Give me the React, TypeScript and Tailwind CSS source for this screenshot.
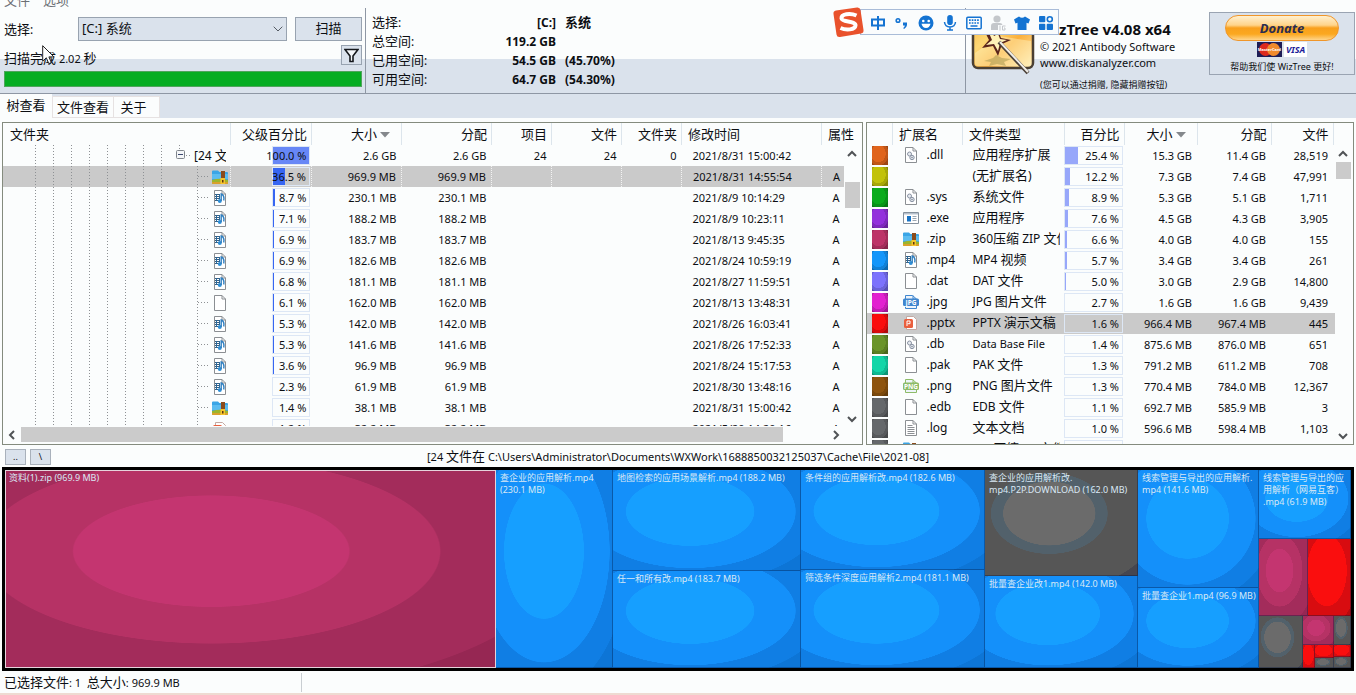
import type { ReactNode } from "react";

/* ---------- text: Han runs are set larger than Latin runs ---------- */

type Size = "ui" | "compact" | "tiny";

const hanSize: Record<Size, string> = {
  ui: "text-[13px]",
  compact: "text-[13px]",
  tiny: "text-[9px]",
};
const latinSize: Record<Size, string> = {
  ui: "text-[12px]",
  compact: "text-[11px]",
  tiny: "text-[9px]",
};

function Mixed({ children, size = "ui" }: { children: string; size?: Size }) {
  const parts = children.split(/([\u3000-\u9fff\uff00-\uffef]+)/).filter(Boolean);
  return (
    <>
      {parts.map((p, i) => (
        <span key={i} className={/[\u3000-\u9fff]/.test(p) ? hanSize[size] : latinSize[size]}>
          {p}
        </span>
      ))}
    </>
  );
}

/* ---------- file icons ---------- */

type IconName = "zip" | "mp4" | "blank" | "gear" | "exe" | "jpg" | "png" | "pptx" | "text" | "none";

function Page({ children }: { children?: ReactNode }) {
  return (
    <svg viewBox="0 0 16 16" className="h-4 w-4 shrink-0">
      <path d="M2.5.5h7.500l3.500 3.500v11.500h-11z" fill="#fff" stroke="#8b8f93" />
      <path d="M10 .5v3.500h3.500" fill="none" stroke="#8b8f93" />
      {children}
    </svg>
  );
}

function FileIcon({ name }: { name: IconName }) {
  switch (name) {
    case "zip":
      return (
        <svg viewBox="0 0 16 16" className="h-4 w-4 shrink-0">
          <path d="M0 2.500q0-1 1-1h5l1.500 1.500h7.500q1 0 1 1v8H0z" fill="#3aa5e6" />
          <path d="M0 5h16v5H0z" fill="#5bbcf0" />
          <path d="M0 11q8-2.500 16 0v3q0 1-1 1H1q-1 0-1-1z" fill="#9db52c" />
          <path d="M0 13h16v1q0 1-1 1H1q-1 0-1-1z" fill="#d9a02c" />
          <path d="M9 2h4v9H9z" fill="#8a4b1c" />
          <path d="M8.500 9h4.500v6H8.500z" fill="#f6c52c" />
          <path d="M10 11h1.500v2.500H10z" fill="#5a3510" />
        </svg>
      );
    case "mp4":
      return (
        <Page>
          <path d="M3 4.500h5M3 6.500h4M3 8.500h5M3 10.500h3" stroke="#3a5f80" />
          <path d="M4.500 4v7M7.500 4v5" stroke="#2b6a9c" />
          <circle cx="7.800" cy="11" r="2" fill="#2f8fd6" />
          <path d="M9.200 11V4q3.600 1.500 2.500 6.500" fill="none" stroke="#2f7fc0" strokeWidth="1.400" />
        </Page>
      );
    case "gear":
      return (
        <Page>
          <circle cx="6.500" cy="7" r="2" fill="#e8ecf1" stroke="#8993a3" />
          <circle cx="9" cy="10.500" r="2.200" fill="#dfe4ea" stroke="#8993a3" />
          <circle cx="9" cy="10.500" r=".7" fill="#6e7989" />
        </Page>
      );
    case "exe":
      return (
        <svg viewBox="0 0 16 16" className="h-4 w-4 shrink-0">
          <path d="M.5 2.500h15v11H.5z" fill="#fff" stroke="#85909c" />
          <path d="M1 3h14v1.500H1z" fill="#b6c1cc" />
          <path d="M4 6h4v5.500H4z" fill="#1873c4" />
          <path d="M9.500 6.500h4M9.500 8.500h4M9.500 10.500h4" stroke="#9aa6b2" />
        </svg>
      );
    case "jpg":
    case "png": {
      const c = name === "jpg" ? "#3f86cf" : "#8dbb68";
      return (
        <svg viewBox="0 0 16 16" className="h-4 w-4 shrink-0">
          <path d="M2.500 5V1.500h7l4 3.500M10 1.500V5h3.500M2.500 12v2.500h11V12" fill="#eef4fa" stroke={c} />
          <rect x="0" y="4.500" width="16" height="7.500" rx="1.500" fill={c} />
          <text x="8" y="10.700" textAnchor="middle" fontSize="6.500" fontWeight="700" fill="#fff">
            {name.toUpperCase()}
          </text>
        </svg>
      );
    }
    case "pptx":
      return (
        <svg viewBox="0 0 16 16" className="h-4 w-4 shrink-0">
          <path d="M3.500 1.500h7l3 3v10h-10z" fill="#fff" stroke="#c3a9a2" />
          <rect x="1" y="4" width="9" height="9" rx="1.500" fill="#ea5f3d" />
          <path d="M4 11V6h3v2.700H4.500" fill="none" stroke="#fff" />
        </svg>
      );
    case "text":
      return (
        <Page>
          <path d="M4.500 5.500h5M4.500 7.500h7M4.500 9.500h7M4.500 11.500h7M4.500 13.500h7" stroke="#8b8f93" />
        </Page>
      );
    case "blank":
      return <Page />;
    default:
      return <span className="h-4 w-4 shrink-0" />;
  }
}

function Chevron({ dir }: { dir: "up" | "down" | "left" | "right" }) {
  const d = {
    up: "M1 7 5 3l4 4",
    down: "M1 3l4 4 4-4",
    left: "M7 1 3 5l4 4",
    right: "M3 1l4 4-4 4",
  }[dir];
  return (
    <svg viewBox="0 0 10 10" className="h-[10px] w-[10px] shrink-0">
      <path d={d} fill="none" stroke="#505356" strokeWidth="2" />
    </svg>
  );
}

/* ---------- data ---------- */

type TreeRow = { icon: IconName; pct: number; size: string; date: string };

const treeRows: TreeRow[] = [
  { icon: "zip", pct: 36.5, size: "969.9 MB", date: "2021/8/31 14:55:54" },
  { icon: "mp4", pct: 8.7, size: "230.1 MB", date: "2021/8/9 10:14:29" },
  { icon: "mp4", pct: 7.1, size: "188.2 MB", date: "2021/8/9 10:23:11" },
  { icon: "mp4", pct: 6.9, size: "183.7 MB", date: "2021/8/13 9:45:35" },
  { icon: "mp4", pct: 6.9, size: "182.6 MB", date: "2021/8/24 10:59:19" },
  { icon: "mp4", pct: 6.8, size: "181.1 MB", date: "2021/8/27 11:59:51" },
  { icon: "blank", pct: 6.1, size: "162.0 MB", date: "2021/8/13 13:48:31" },
  { icon: "mp4", pct: 5.3, size: "142.0 MB", date: "2021/8/26 16:03:41" },
  { icon: "mp4", pct: 5.3, size: "141.6 MB", date: "2021/8/26 17:52:33" },
  { icon: "mp4", pct: 3.6, size: "96.9 MB", date: "2021/8/24 15:17:53" },
  { icon: "mp4", pct: 2.3, size: "61.9 MB", date: "2021/8/30 13:48:16" },
  { icon: "zip", pct: 1.4, size: "38.1 MB", date: "2021/8/31 15:00:42" },
  { icon: "pptx", pct: 1.2, size: "32.2 MB", date: "2021/5/20 14:20:16" },
];

type ExtRow = {
  color: string;
  icon: IconName;
  ext: string;
  type: string;
  pct: number;
  size: string;
  alloc: string;
  files: string;
};

const extRows: ExtRow[] = [
  { color: "bg-[#e0641c]", icon: "gear", ext: ".dll", type: "应用程序扩展", pct: 25.4, size: "15.3 GB", alloc: "11.4 GB", files: "28,519" },
  { color: "bg-[#c2c20a]", icon: "none", ext: "", type: "(无扩展名)", pct: 12.2, size: "7.3 GB", alloc: "7.4 GB", files: "47,991" },
  { color: "bg-[#0aac1c]", icon: "gear", ext: ".sys", type: "系统文件", pct: 8.9, size: "5.3 GB", alloc: "5.1 GB", files: "1,711" },
  { color: "bg-[#9332dc]", icon: "exe", ext: ".exe", type: "应用程序", pct: 7.6, size: "4.5 GB", alloc: "4.3 GB", files: "3,905" },
  { color: "bg-[#bd3468]", icon: "zip", ext: ".zip", type: "360压缩 ZIP 文件", pct: 6.6, size: "4.0 GB", alloc: "4.0 GB", files: "155" },
  { color: "bg-[#1496fa]", icon: "mp4", ext: ".mp4", type: "MP4 视频", pct: 5.7, size: "3.4 GB", alloc: "3.4 GB", files: "261" },
  { color: "bg-[#7c72fc]", icon: "blank", ext: ".dat", type: "DAT 文件", pct: 5.0, size: "3.0 GB", alloc: "2.9 GB", files: "14,800" },
  { color: "bg-[#e222d0]", icon: "jpg", ext: ".jpg", type: "JPG 图片文件", pct: 2.7, size: "1.6 GB", alloc: "1.6 GB", files: "9,439" },
  { color: "bg-[#fa0c0c]", icon: "pptx", ext: ".pptx", type: "PPTX 演示文稿", pct: 1.6, size: "966.4 MB", alloc: "967.4 MB", files: "445" },
  { color: "bg-[#6a9428]", icon: "gear", ext: ".db", type: "Data Base File", pct: 1.4, size: "875.6 MB", alloc: "876.0 MB", files: "651" },
  { color: "bg-[#12d6a8]", icon: "blank", ext: ".pak", type: "PAK 文件", pct: 1.3, size: "791.2 MB", alloc: "611.2 MB", files: "708" },
  { color: "bg-[#8e540e]", icon: "png", ext: ".png", type: "PNG 图片文件", pct: 1.3, size: "770.4 MB", alloc: "784.0 MB", files: "12,367" },
  { color: "bg-[#65686b]", icon: "blank", ext: ".edb", type: "EDB 文件", pct: 1.1, size: "692.7 MB", alloc: "585.9 MB", files: "3" },
  { color: "bg-[#65686b]", icon: "text", ext: ".log", type: "文本文档", pct: 1.0, size: "596.6 MB", alloc: "598.4 MB", files: "1,103" },
  { color: "bg-[#65686b]", icon: "zip", ext: ".7z", type: "360压缩 7Z 文件", pct: 0.9, size: "", alloc: "", files: "" },
];

/* ---------- header ---------- */

function ScanControls() {
  return (
    <section className="flex w-[365px] shrink-0 flex-col pl-1 pr-[3px] pt-[9px]">
      <div className="flex items-center">
        <label htmlFor="drive" className="w-[74px] leading-4">
          <Mixed>选择:</Mixed>
        </label>
        <div className="relative flex-1">
          <select
            id="drive"
            className="block h-6 w-full appearance-none border border-[#98a3b0] bg-[#dae2ec] pl-[3px] text-[13px] outline-none"
          >
            <option>[C:] 系统</option>
          </select>
          <svg viewBox="0 0 10 6" className="pointer-events-none absolute right-1 top-[9px] h-[6px] w-[10px]">
            <path d="M.7.700 5 5 9.300.700" fill="none" stroke="#555b63" />
          </svg>
        </div>
        <button className="ml-2 h-6 w-[67px] border border-[#98a3b0] bg-[#dae2ec] text-[13px]">扫描</button>
      </div>
      <div className="mt-1 flex items-start justify-between">
        <p className="pt-[5px] leading-4">
          <Mixed size="compact">扫描完成 2.02 秒</Mixed>
        </p>
        <button
          aria-label="筛选"
          className="flex h-5 w-[21px] items-center justify-center border border-[#98a3b0] bg-[#dae2ec]"
        >
          <svg viewBox="0 0 15 15" className="h-[15px] w-[15px]">
            <path d="M1 1.500h13L9 8v5.500H6V8z" fill="#f4f7fa" stroke="#15181c" strokeWidth="1.600" />
          </svg>
        </button>
      </div>
      <div
        role="progressbar"
        aria-valuenow={100}
        aria-label="扫描进度"
        className="mt-1 h-4 border border-[#4fa45c] bg-[#06ad22]"
      />
    </section>
  );
}

const driveInfo = [
  ["选择:", "[C:]", "系统"],
  ["总空间:", "119.2 GB", ""],
  ["已用空间:", "54.5 GB", "(45.70%)"],
  ["可用空间:", "64.7 GB", "(54.30%)"],
];

function DriveInfo() {
  return (
    <section className="flex-1 border-l border-[#8e97a4] pl-[6px] pt-[5px]">
      <table className="border-collapse">
        <tbody>
          {driveInfo.map(([k, v, extra]) => (
            <tr key={k} className="h-[19px] leading-4">
              <th scope="row" className="w-[100px] p-0 text-left font-normal">
                <Mixed>{k}</Mixed>
              </th>
              <td className="w-[84px] p-0 text-right font-bold">
                <Mixed>{v}</Mixed>
              </td>
              <td className="p-0 pl-[9px] font-bold">
                <Mixed>{extra}</Mixed>
              </td>
            </tr>
          ))}
        </tbody>
      </table>
    </section>
  );
}

function WizardLogo() {
  return (
    <svg viewBox="0 0 64 66" className="h-[66px] w-16 shrink-0">
      <defs>
        <linearGradient id="goldBox" x1="0" y1="0" x2="1" y2="1">
          <stop offset="0" stopColor="#f7b23a" />
          <stop offset=".35" stopColor="#fdd774" />
          <stop offset=".6" stopColor="#fbb03c" />
          <stop offset="1" stopColor="#fff0bd" />
        </linearGradient>
      </defs>
      <rect x="2" y="2" width="60" height="55" rx="5" fill="url(#goldBox)" stroke="#4a3f33" strokeWidth="2.500" />
      <path d="M4 42 28 25 60 30V52q0 3-3 3H7q-3 0-3-3z" fill="#fff3c4" opacity=".45" />
      <path d="M13 50l9-3 3-3 6 3 9 1-7 3 2 4-9-2-8 2 2-4z" fill="#b9a55c" opacity=".7" />
      <path d="M26 16l4 11 10 2-9 4-4 12-5-10-11 2 7-8-5-10 9 5z" fill="#5a241b" />
      <path d="M26 20l3 8 7 1-7 3-2 8-4-7-8 1 6-5-3-7 6 3z" fill="#fff2b8" />
      <path d="M28 31 57 62" stroke="#4b4038" strokeWidth="4" />
      <path d="M29 31 57 61" stroke="#f2efe9" strokeWidth="2" />
    </svg>
  );
}

function About() {
  return (
    <section className="flex w-[391px] shrink-0 border-l border-[#8e97a4] pr-px">
      <div className="pl-[5px] pt-[3px]">
        <WizardLogo />
      </div>
      <div className="w-[174px] shrink-0 whitespace-nowrap pl-[5px] pt-[11px]">
        <h1 className="text-[15px] font-bold leading-5">WizTree v4.08 x64</h1>
        <p className="text-[11px] leading-4">© 2021 Antibody Software</p>
        <a href="https://www.diskanalyzer.com" className="block text-[11px] leading-4">
          www.diskanalyzer.com
        </a>
        <p className="mt-[6px] text-[9px] leading-4">(您可以通过捐赠, 隐藏捐赠按钮)</p>
      </div>
      <div className="mt-1 flex h-[63px] flex-1 flex-col items-center border border-[#9aa4b2] bg-[#dae2ec] pt-[2px]">
        <button className="h-[26px] w-[114px] rounded-full border border-[#f0962a] bg-[linear-gradient(#fff0cf_0,#ffd48a_38%,#f9a01c_50%,#fba81f_75%,#ffd58a_100%)] text-[13px] font-bold italic leading-[22px] text-[#2b2d4f]">
          Donate
        </button>
        <div className="mt-px flex h-[15px] gap-[2px]">
          <svg viewBox="0 0 25 15" className="h-[15px] w-[25px]">
            <path d="M0 0h25v15H0z" fill="#1d1c55" />
            <circle cx="8.500" cy="7.500" r="6.500" fill="#dc2a1e" />
            <circle cx="16.500" cy="7.500" r="6.500" fill="#f08a2c" />
            <text x="12.500" y="9" textAnchor="middle" fontSize="4" fontWeight="700" fill="#fff">
              MasterCard
            </text>
          </svg>
          <span className="bg-white px-[2px] text-[9px] font-bold italic leading-[15px] text-[#1c1c98]">VISA</span>
        </div>
        <p className="mt-[3px] whitespace-nowrap text-[9px] leading-[14px]">
          <Mixed size="tiny">帮助我们使 WizTree 更好!</Mixed>
        </p>
      </div>
    </section>
  );
}

/* ---------- floating input-method bar ---------- */

function InputMethodBar() {
  const blue = "#1473d2";
  return (
    <div className="absolute left-[832px] top-[6px] flex items-center">
      <svg viewBox="0 0 32 32" className="z-10 h-8 w-8 shrink-0">
        <path d="M4 4.500 25 1.500q3-.4 3.500 2.500l3 20q.4 3-2.500 3.500L8 31q-3 .5-3.500-2.500L1.500 8Q1 5 4 4.500z" fill="#e9522c" />
        <path
          d="M24.500 9.500C18 6.500 9 8 9.500 12.500c.5 4 14.500 2 14 7C23 24 14 24.500 8.500 22"
          fill="none"
          stroke="#fff"
          strokeWidth="4"
        />
      </svg>
      <div className="-ml-1 flex h-[26px] w-[199px] items-center gap-2 border border-[#a9bcd8] bg-[#fafcfd] pl-[9px] pt-px">
        <svg viewBox="0 0 16 16" className="h-4 w-4">
          <path d="M2 4.500h12v6H2zM8 1v14" fill="none" stroke={blue} strokeWidth="2" />
        </svg>
        <svg viewBox="0 0 16 16" className="h-4 w-4">
          <circle cx="4" cy="5.500" r="1.800" fill="none" stroke={blue} strokeWidth="1.600" />
          <path d="M9 7.500h4q.5 4.500-3 6.500l-.8-1q1.500-1 1.600-2.500H9z" fill={blue} />
        </svg>
        <svg viewBox="0 0 16 16" className="h-4 w-4">
          <circle cx="8" cy="8" r="7.500" fill={blue} />
          <circle cx="5.300" cy="6" r="1.300" fill="#fff" />
          <circle cx="10.700" cy="6" r="1.300" fill="#fff" />
          <path d="M3.500 8.800h9q-1 4.200-4.500 4.200T3.500 8.800z" fill="#fff" />
        </svg>
        <svg viewBox="0 0 16 16" className="h-4 w-4">
          <rect x="5.200" y="0" width="5.600" height="10" rx="2.800" fill={blue} />
          <path d="M2.500 7q.5 5 5.500 5t5.500-5M8 12v2.500M5 15h6" fill="none" stroke={blue} strokeWidth="1.500" />
        </svg>
        <svg viewBox="0 0 16 16" className="h-4 w-4">
          <rect x=".8" y="2.300" width="14.400" height="11.400" rx="1" fill="none" stroke={blue} strokeWidth="1.500" />
          <path d="M3 5.200h10M3 8h10" stroke={blue} strokeWidth="1.700" strokeDasharray="1.700 1" />
          <path d="M4.500 11h7" stroke={blue} strokeWidth="1.500" />
        </svg>
        <svg viewBox="0 0 16 16" className="h-4 w-4">
          <circle cx="7" cy="4" r="3.600" fill="#c4c7cb" />
          <path d="M1 15V11q0-3 3-3h6q2 0 2.500 2H8v5z" fill="#c4c7cb" />
          <path d="M10 10.500v5M15.500 11H12.500v4h2.500v-2h-1" fill="none" stroke="#c4c7cb" />
        </svg>
        <svg viewBox="0 0 16 16" className="h-4 w-4">
          <path d="M5 1.500q3 2.500 6 0l5 3-1.500 4-2-.8V15h-9V7.700l-2 .8L0 4.500z" fill={blue} />
        </svg>
        <svg viewBox="0 0 16 16" className="h-4 w-4">
          <rect x="1" y="1" width="6.300" height="6.300" rx="1" fill={blue} />
          <rect x="1" y="8.700" width="6.300" height="6.300" rx="1" fill={blue} />
          <rect x="8.700" y="8.700" width="6.300" height="6.300" rx="1" fill={blue} />
          <circle cx="11.800" cy="4.200" r="2.500" fill="none" stroke={blue} strokeWidth="1.600" />
        </svg>
      </div>
    </div>
  );
}

/* ---------- tables ---------- */

function Th({ children, left }: { children?: ReactNode; left?: string }) {
  return (
    <th
      scope="col"
      className={`overflow-hidden whitespace-nowrap border-r border-[#dce5ec] text-[13px] font-normal ${
        left ? `text-left ${left}` : "pr-[4px] text-right"
      }`}
    >
      {children}
    </th>
  );
}

function SortArrow() {
  return (
    <svg viewBox="0 0 10 6" className="ml-[3px] mr-[7px] inline h-[6px] w-[10px] align-[1px]">
      <path d="M0 0h10L5 5.500z" fill="#84888c" />
    </svg>
  );
}

function Guides({ root }: { root?: boolean }) {
  return (
    <svg viewBox="0 0 206 21" className="h-[21px] w-[206px] shrink-0">
      <g stroke="#8e9194" strokeDasharray="1 2" fill="none">
        {Array.from({ length: 8 }, (_, i) => (
          <path key={i} d={`M${32.5 + i * 18} 0v21`} />
        ))}
        {root ? <path d="M176.500 0v5M183 10.500h5" /> : <path d="M194.500 0v21M195 10.500h11" />}
      </g>
      {root && (
        <>
          <rect x="173.500" y="5.500" width="8" height="8" rx="1" fill="#f4f6f8" stroke="#7f858c" />
          <path d="M175 9.500h5" stroke="#3c4a70" />
        </>
      )}
    </svg>
  );
}

function PctBar({ pct, width, inner, fill }: { pct: number; width: string; inner: number; fill: string }) {
  const px = pct === 100 ? inner : pct < 3 ? 0 : Math.max(1, Math.floor((inner * pct) / 100 - 1));
  return (
    <div className={`relative ml-auto mr-px flex h-[19px] items-center justify-end border border-[#dde7f5] pr-[3px] ${width}`}>
      <span className={`absolute inset-y-0 left-0 ${fill}`} style={{ width: px }} />
      <span className="relative shrink-0 whitespace-nowrap text-[11px]">{pct.toFixed(1)} %</span>
    </div>
  );
}

function TreeTable() {
  const num = "p-0 pr-[5px] text-right";
  return (
    <div className="relative h-[323px] min-w-0 flex-[862] overflow-hidden border border-[#848b7e] bg-[#fbfdfd]">
      <table className="w-full table-fixed border-collapse text-[11px] leading-4">
        <colgroup>
          <col />
          <col className="w-[81px]" />
          <col className="w-[90px]" />
          <col className="w-[90px]" />
          <col className="w-[60px]" />
          <col className="w-[70px]" />
          <col className="w-[60px]" />
          <col className="w-[140px]" />
          <col className="w-[41px]" />
        </colgroup>
        <thead>
          <tr className="h-[22px]">
            <Th left="pl-[7px]">文件夹</Th>
            <Th>父级百分比</Th>
            <Th>
              大小
              <SortArrow />
            </Th>
            <Th>分配</Th>
            <Th>项目</Th>
            <Th>文件</Th>
            <Th>文件夹</Th>
            <Th left="pl-[6px]">修改时间</Th>
            <th scope="col" className="whitespace-nowrap pl-[6px] text-left text-[13px] font-normal">
              属性
            </th>
          </tr>
        </thead>
        <tbody>
          <tr className="h-[21px]">
            <td className="overflow-hidden p-0">
              <div className="flex h-[21px] w-[223px] items-center overflow-hidden whitespace-nowrap">
                <Guides root />
                <span className="-ml-[15px] pb-px">
                  <Mixed>[24 文</Mixed>
                </span>
              </div>
            </td>
            <td className="p-0">
              <PctBar pct={100} width="w-[38px]" inner={36} fill="bg-[#6787f6]" />
            </td>
            <td className={num}>2.6 GB</td>
            <td className={num}>2.6 GB</td>
            <td className={num}>24</td>
            <td className={num}>24</td>
            <td className={num}>0</td>
            <td className="p-0 pl-[11px]">2021/8/31 15:00:42</td>
            <td />
          </tr>
          {treeRows.map((r, i) => {
            const cell = i === 0 ? "border-r border-dotted border-[#f3f3f3]" : "";
            return (
              <tr key={i} className={i === 0 ? "h-[21px] bg-[#cacaca]" : "h-[21px]"}>
                <td className={`overflow-hidden p-0 ${cell}`}>
                  <div className="flex h-[21px] items-center gap-[3px]">
                    <Guides />
                    <FileIcon name={r.icon} />
                  </div>
                </td>
                <td className={`p-0 ${cell}`}>
                  <PctBar pct={r.pct} width="w-[38px]" inner={36} fill="bg-[#3766f2]" />
                </td>
                <td className={`${num} ${cell}`}>{r.size}</td>
                <td className={`${num} ${cell}`}>{r.size}</td>
                <td className={cell} />
                <td className={cell} />
                <td className={cell} />
                <td className={`p-0 pl-[11px] ${cell}`}>{r.date}</td>
                <td className="p-0 pl-[11px] text-left">A</td>
              </tr>
            );
          })}
        </tbody>
      </table>
      <div className="absolute bottom-[17px] right-0 top-[22px] flex w-[18px] flex-col items-center bg-[#fbfdfd] pr-[2px]">
        <div className="pt-1">
          <Chevron dir="up" />
        </div>
        <div className="mt-[23px] h-[26px] w-[15px] bg-[#cbcbcb]" />
        <div className="mt-auto pb-[3px]">
          <Chevron dir="down" />
        </div>
      </div>
      <div className="absolute inset-x-0 bottom-0 flex h-[18px] items-center bg-[#fbfdfd] pb-px pl-1 pr-[21px]">
        <Chevron dir="left" />
        <div className="ml-1 mr-[48px] h-[15px] flex-1 bg-[#cbcbcb]" />
        <Chevron dir="right" />
      </div>
    </div>
  );
}

function ExtensionTable() {
  const num = "p-0 pr-[5px] text-right";
  return (
    <div className="relative h-[323px] min-w-0 flex-[487] overflow-hidden border border-[#848b7e] bg-[#fbfdfd]">
      <table className="w-full table-fixed border-collapse text-[11px] leading-4">
        <colgroup>
          <col className="w-[25px]" />
          <col className="w-[70px]" />
          <col />
          <col className="w-[60px]" />
          <col className="w-[73px]" />
          <col className="w-[74px]" />
          <col className="w-[62px]" />
          <col className="w-[20px]" />
        </colgroup>
        <thead>
          <tr className="h-[22px]">
            <Th />
            <Th left="pl-[6px]">扩展名</Th>
            <Th left="pl-[6px]">文件类型</Th>
            <Th>百分比</Th>
            <Th>
              大小
              <SortArrow />
            </Th>
            <Th>分配</Th>
            <Th>文件</Th>
            <th />
          </tr>
        </thead>
        <tbody>
          {extRows.map((r, i) => (
            <tr key={i} className={r.ext === ".pptx" ? "h-[21px] bg-[#cacaca]" : "h-[21px]"}>
              <td className="p-0 pl-[5px]">
                <div className={`h-[19px] w-4 ${r.color}`}>
                  <div className="h-full w-full bg-[radial-gradient(ellipse_100%_100%_at_40%_40%,transparent_0,transparent_45%,rgba(0,0,0,0.14)_46%,rgba(0,0,0,0.14)_62%,rgba(0,0,0,0.3)_63%)]" />
                </div>
              </td>
              <td className="p-0 pl-[11px]">
                <div className="flex h-[21px] items-center gap-[7px] pb-px text-[12px]">
                  <FileIcon name={r.icon} />
                  {r.ext}
                </div>
              </td>
              <td className="p-0 pl-[10px] pr-[4px]">
                <div className="h-[21px] overflow-hidden whitespace-nowrap leading-[19px]">
                  {r.ext === ".db" ? r.type : <Mixed>{r.type}</Mixed>}
                </div>
              </td>
              <td className="p-0">
                <PctBar pct={r.pct} width="w-[59px]" inner={57} fill="bg-[#97a7fa]" />
              </td>
              <td className={num}>{r.size}</td>
              <td className={num}>{r.alloc}</td>
              <td className={num}>{r.files}</td>
              <td />
            </tr>
          ))}
        </tbody>
      </table>
      <div className="absolute bottom-0 right-0 top-[22px] flex w-[18px] flex-col items-center bg-[#fbfdfd] pr-[2px]">
        <div className="pt-1">
          <Chevron dir="up" />
        </div>
        <div className="mt-[3px] h-[17px] w-[15px] bg-[#cbcbcb]" />
        <div className="mt-auto pb-[3px]">
          <Chevron dir="down" />
        </div>
      </div>
    </div>
  );
}

/* ---------- treemap ---------- */

const tones = {
  pink: "bg-[radial-gradient(ellipse_100%_100%_at_42%_41%,#c43570_0,#c43570_28%,#b63265_28.300%,#b63265_46.500%,#a32c5b_46.800%,#a32c5b_72%,#962753_72.300%)]",
  blue: "bg-[radial-gradient(ellipse_100%_100%_at_41%_41%,#169fff_0,#169fff_34%,#1490fa_34.300%,#1490fa_56%,#107ee4_56.300%,#107ee4_72%,#0d75d6_72.300%)]",
  gray: "bg-[radial-gradient(ellipse_100%_100%_at_42%_41%,#6b6b6b_0,#6b6b6b_30%,#52616b_30.300%,#52616b_38%,#565656_38.300%,#565656_74%,#46464f_74.300%)]",
  red: "bg-[radial-gradient(ellipse_100%_100%_at_44%_41%,#fa0e0e_0,#fa0e0e_46%,#d80c10_46.300%,#d80c10_72%,#b80a0e_72.300%)]",
};

function Cell({ tone, grow, label, selected }: { tone: keyof typeof tones; grow: string; label?: string; selected?: boolean }) {
  return (
    <div
      className={`min-h-0 min-w-0 basis-0 overflow-hidden ${grow} ${tones[tone]} ${
        selected ? "shadow-[inset_0_0_0_1px_#e6d3dc]" : "shadow-[inset_-1px_-1px_0_rgba(0,20,60,0.35)]"
      }`}
    >
      {label && (
        <p className="whitespace-pre pl-1 pt-[2px] text-[9px] leading-3 text-[#d9e8f5]">
          <Mixed size="tiny">{label}</Mixed>
        </p>
      )}
    </div>
  );
}

function Treemap() {
  return (
    <div className="flex min-h-[204px] flex-1 border-[3px] border-black bg-black">
      <Cell tone="pink" grow="grow-[491]" label="资料(1).zip (969.9 MB)" selected />
      <Cell tone="blue" grow="grow-[117]" label={"查企业的应用解析.mp4\n(230.1 MB)"} />
      <div className="flex min-w-0 grow-[188] basis-0 flex-col">
        <Cell tone="blue" grow="grow-[101]" label="地图检索的应用场景解析.mp4 (188.2 MB)" />
        <Cell tone="blue" grow="grow-[97]" label="任一和所有改.mp4 (183.7 MB)" />
      </div>
      <div className="flex min-w-0 grow-[184] basis-0 flex-col">
        <Cell tone="blue" grow="grow-[100]" label="条件组的应用解析改.mp4 (182.6 MB)" />
        <Cell tone="blue" grow="grow-[98]" label="筛选条件深度应用解析2.mp4 (181.1 MB)" />
      </div>
      <div className="flex min-w-0 grow-[153] basis-0 flex-col">
        <Cell tone="gray" grow="grow-[106]" label={"查企业的应用解析改.\nmp4.P2P.DOWNLOAD (162.0 MB)"} />
        <Cell tone="blue" grow="grow-[92]" label="批量查企业改1.mp4 (142.0 MB)" />
      </div>
      <div className="flex min-w-0 grow-[121] basis-0 flex-col">
        <Cell tone="blue" grow="grow-[118]" label={"线索管理与导出的应用解析.\nmp4 (141.6 MB)"} />
        <Cell tone="blue" grow="grow-[80]" label="批量查企业1.mp4 (96.9 MB)" />
      </div>
      <div className="flex min-w-0 grow-[92] basis-0 flex-col">
        <Cell tone="blue" grow="grow-[69]" label={"线索管理与导出的应\n用解析（网易互客）\n.mp4 (61.9 MB)"} />
        <div className="flex min-h-0 grow-[77] basis-0">
          <Cell tone="pink" grow="grow-[49]" />
          <Cell tone="red" grow="grow-[43]" />
        </div>
        <div className="flex min-h-0 grow-[52] basis-0">
          <Cell tone="gray" grow="grow-[44]" />
          <div className="flex min-w-0 grow-[48] basis-0 flex-col">
            <div className="flex min-h-0 grow-[29] basis-0">
              <Cell tone="pink" grow="grow-[31]" />
              <Cell tone="gray" grow="grow-[17]" />
            </div>
            <div className="flex min-h-0 grow-[23] basis-0">
              <Cell tone="red" grow="grow-[12]" />
              <div className="flex min-w-0 grow-[19] basis-0 flex-col">
                <Cell tone="red" grow="grow-[13]" />
                <Cell tone="gray" grow="grow-[10]" />
              </div>
              <div className="flex min-w-0 grow-[17] basis-0 flex-col">
                <Cell tone="red" grow="grow-[12]" />
                <Cell tone="gray" grow="grow-[11]" />
              </div>
            </div>
          </div>
        </div>
      </div>
    </div>
  );
}

/* ---------- page ---------- */

export default function App() {
  return (
    <div className="relative flex min-h-screen flex-col overflow-hidden bg-[#fbfdfd] font-['Noto_Sans','Noto_Sans_CJK_SC',sans-serif] text-[12px] text-[#0c0e12]">
      <header className="border-b border-[#8e97a4] bg-[linear-gradient(#fbfdfd_0,#fbfdfd_59px,#dae2ec_59px)]">
        <nav className="flex h-2 items-end gap-[13px] overflow-hidden pl-1 text-[13px] leading-4 text-[#6b6f74]">
          <a href="#file">文件</a>
          <a href="#options">选项</a>
        </nav>
        <div className="flex h-[85px]">
          <ScanControls />
          <DriveInfo />
          <About />
        </div>
      </header>

      <div role="tablist" className="flex h-6 items-end bg-[#dae2ec] text-[13px]">
        <button role="tab" aria-selected="true" className="h-6 w-[52px] bg-[#fbfdfd] pb-[3px] leading-5">
          树查看
        </button>
        <button role="tab" aria-selected="false" className="h-[22px] w-[62px] border border-[#e6e2e2] bg-[#fbfdfd] leading-5">
          文件查看
        </button>
        <button
          role="tab"
          aria-selected="false"
          className="h-[22px] w-[46px] border-y border-r border-[#e6e2e2] bg-[#fbfdfd] pr-[6px] leading-5"
        >
          关于
        </button>
      </div>

      <main className="flex flex-1 flex-col pl-[2px] pr-[2px] pt-1">
        <div className="flex gap-[3px]">
          <TreeTable />
          <ExtensionTable />
        </div>
        <div className="grid h-[22px] grid-cols-[1fr_auto_1fr] items-center pt-px">
          <div className="flex gap-1 pl-[3px] pt-px text-[9px]">
            <button className="h-4 w-[21px] border border-[#a9b1bb] bg-[#dae2ec] leading-3">..</button>
            <button className="h-4 w-[21px] border border-[#a9b1bb] bg-[#dae2ec] leading-3">\</button>
          </div>
          <p className="whitespace-nowrap leading-5">
            <Mixed size="compact">{"[24 文件在 C:\\Users\\Administrator\\Documents\\WXWork\\1688850032125037\\Cache\\File\\2021-08]"}</Mixed>
          </p>
        </div>
        <Treemap />
      </main>

      <footer className="flex h-6 items-center border-b-2 border-[#eedbd2] pl-1 leading-5">
        <p className="w-[298px] whitespace-pre border-r border-[#c9ced2] leading-[18px]">
          <Mixed size="compact">{"已选择文件: 1  总大小: 969.9 MB"}</Mixed>
        </p>
      </footer>

      <InputMethodBar />
      <svg viewBox="0 0 14 20" className="pointer-events-none absolute left-[42px] top-[45px] h-5 w-[14px]">
        <path d="M.7.700v15.500l3.600-3.400 2.500 5.800 2.500-1-2.400-5.700h5z" fill="#fff" stroke="#222" />
      </svg>
    </div>
  );
}
